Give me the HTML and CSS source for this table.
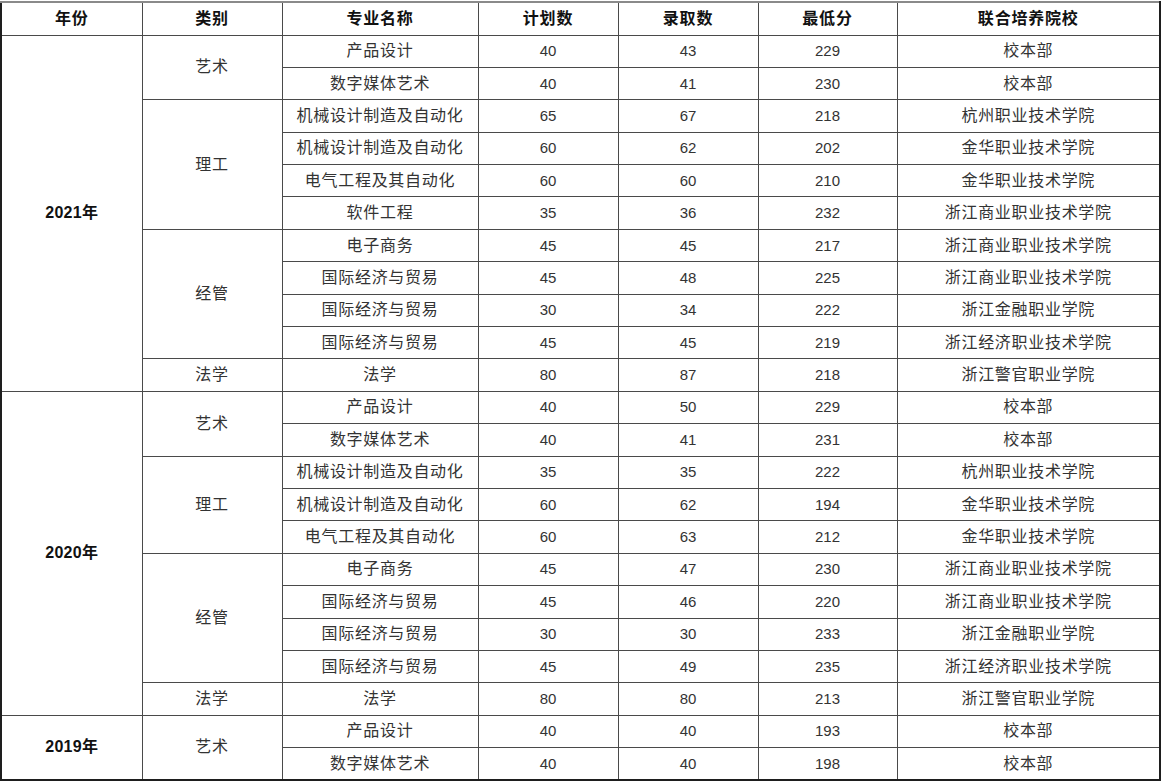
FILE: index.html
```html
<!DOCTYPE html>
<html lang="zh-CN">
<head>
<meta charset="utf-8">
<title>联合培养录取情况</title>
<link rel="stylesheet" href="styles.css">
</head>
<body>
<table class="score-table">
  <colgroup>
    <col class="c-year"><col class="c-cat"><col class="c-major"><col class="c-num"><col class="c-num"><col class="c-num2"><col class="c-school">
  </colgroup>
  <thead>
    <tr class="head-row">
      <th>年份</th><th>类别</th><th>专业名称</th><th>计划数</th><th>录取数</th><th>最低分</th><th>联合培养院校</th>
    </tr>
  </thead>
  <tbody>
    <tr class="year-start"><td class="year" rowspan="11">2021年</td><td class="cat" rowspan="2">艺术</td><td>产品设计</td><td class="n">40</td><td class="n">43</td><td class="n">229</td><td>校本部</td></tr>
    <tr><td>数字媒体艺术</td><td class="n">40</td><td class="n">41</td><td class="n">230</td><td>校本部</td></tr>
    <tr><td class="cat" rowspan="4">理工</td><td>机械设计制造及自动化</td><td class="n">65</td><td class="n">67</td><td class="n">218</td><td>杭州职业技术学院</td></tr>
    <tr><td>机械设计制造及自动化</td><td class="n">60</td><td class="n">62</td><td class="n">202</td><td>金华职业技术学院</td></tr>
    <tr><td>电气工程及其自动化</td><td class="n">60</td><td class="n">60</td><td class="n">210</td><td>金华职业技术学院</td></tr>
    <tr><td>软件工程</td><td class="n">35</td><td class="n">36</td><td class="n">232</td><td>浙江商业职业技术学院</td></tr>
    <tr><td class="cat" rowspan="4">经管</td><td>电子商务</td><td class="n">45</td><td class="n">45</td><td class="n">217</td><td>浙江商业职业技术学院</td></tr>
    <tr><td>国际经济与贸易</td><td class="n">45</td><td class="n">48</td><td class="n">225</td><td>浙江商业职业技术学院</td></tr>
    <tr><td>国际经济与贸易</td><td class="n">30</td><td class="n">34</td><td class="n">222</td><td>浙江金融职业学院</td></tr>
    <tr><td>国际经济与贸易</td><td class="n">45</td><td class="n">45</td><td class="n">219</td><td>浙江经济职业技术学院</td></tr>
    <tr><td class="cat">法学</td><td>法学</td><td class="n">80</td><td class="n">87</td><td class="n">218</td><td>浙江警官职业学院</td></tr>

    <tr class="year-start"><td class="year" rowspan="10">2020年</td><td class="cat" rowspan="2">艺术</td><td>产品设计</td><td class="n">40</td><td class="n">50</td><td class="n">229</td><td>校本部</td></tr>
    <tr><td>数字媒体艺术</td><td class="n">40</td><td class="n">41</td><td class="n">231</td><td>校本部</td></tr>
    <tr><td class="cat" rowspan="3">理工</td><td>机械设计制造及自动化</td><td class="n">35</td><td class="n">35</td><td class="n">222</td><td>杭州职业技术学院</td></tr>
    <tr><td>机械设计制造及自动化</td><td class="n">60</td><td class="n">62</td><td class="n">194</td><td>金华职业技术学院</td></tr>
    <tr><td>电气工程及其自动化</td><td class="n">60</td><td class="n">63</td><td class="n">212</td><td>金华职业技术学院</td></tr>
    <tr><td class="cat" rowspan="4">经管</td><td>电子商务</td><td class="n">45</td><td class="n">47</td><td class="n">230</td><td>浙江商业职业技术学院</td></tr>
    <tr><td>国际经济与贸易</td><td class="n">45</td><td class="n">46</td><td class="n">220</td><td>浙江商业职业技术学院</td></tr>
    <tr><td>国际经济与贸易</td><td class="n">30</td><td class="n">30</td><td class="n">233</td><td>浙江金融职业学院</td></tr>
    <tr><td>国际经济与贸易</td><td class="n">45</td><td class="n">49</td><td class="n">235</td><td>浙江经济职业技术学院</td></tr>
    <tr><td class="cat">法学</td><td>法学</td><td class="n">80</td><td class="n">80</td><td class="n">213</td><td>浙江警官职业学院</td></tr>

    <tr class="year-start"><td class="year" rowspan="2">2019年</td><td class="cat" rowspan="2">艺术</td><td>产品设计</td><td class="n">40</td><td class="n">40</td><td class="n">193</td><td>校本部</td></tr>
    <tr><td>数字媒体艺术</td><td class="n">40</td><td class="n">40</td><td class="n">198</td><td>校本部</td></tr>
  </tbody>
</table>
</body>
</html>
```

FILE: styles.css
```css
html, body {
  margin: 0;
  padding: 0;
  background: #ffffff;
}

body {
  padding-top: 1px;
  font-family: "Liberation Sans", "Noto Sans CJK SC", sans-serif;
}

.score-table {
  width: 1159px;
  border-collapse: collapse;
  table-layout: fixed;
  border: 2px solid #1e1e1e;
  border-top-color: #8a8a8a;
  color: #333333;
}

.c-year { width: 141px; }
.c-cat { width: 140px; }
.c-major { width: 196px; }
.c-num { width: 140px; }
.c-num2 { width: 139px; }
.c-school { width: 263px; }

.score-table th,
.score-table td {
  border: 1px solid #4a4a4a;
  padding: 0;
  text-align: center;
  vertical-align: middle;
  white-space: nowrap;
  line-height: 20px;
}

.score-table th {
  font-size: 16px;
  font-weight: bold;
  color: #111111;
  letter-spacing: 0.8px;
}

.head-row { height: 33px; }

.score-table tbody tr { height: 32.4px; }

.score-table td {
  font-size: 16px;
  letter-spacing: 0.7px;
}

.score-table td.n {
  font-size: 15px;
  letter-spacing: 0;
}

.score-table td.year {
  font-weight: bold;
  color: #111111;
  font-size: 16px;
  letter-spacing: 0.3px;
}

.year-start td { border-top: 1px solid #2a2a2a; }
```
